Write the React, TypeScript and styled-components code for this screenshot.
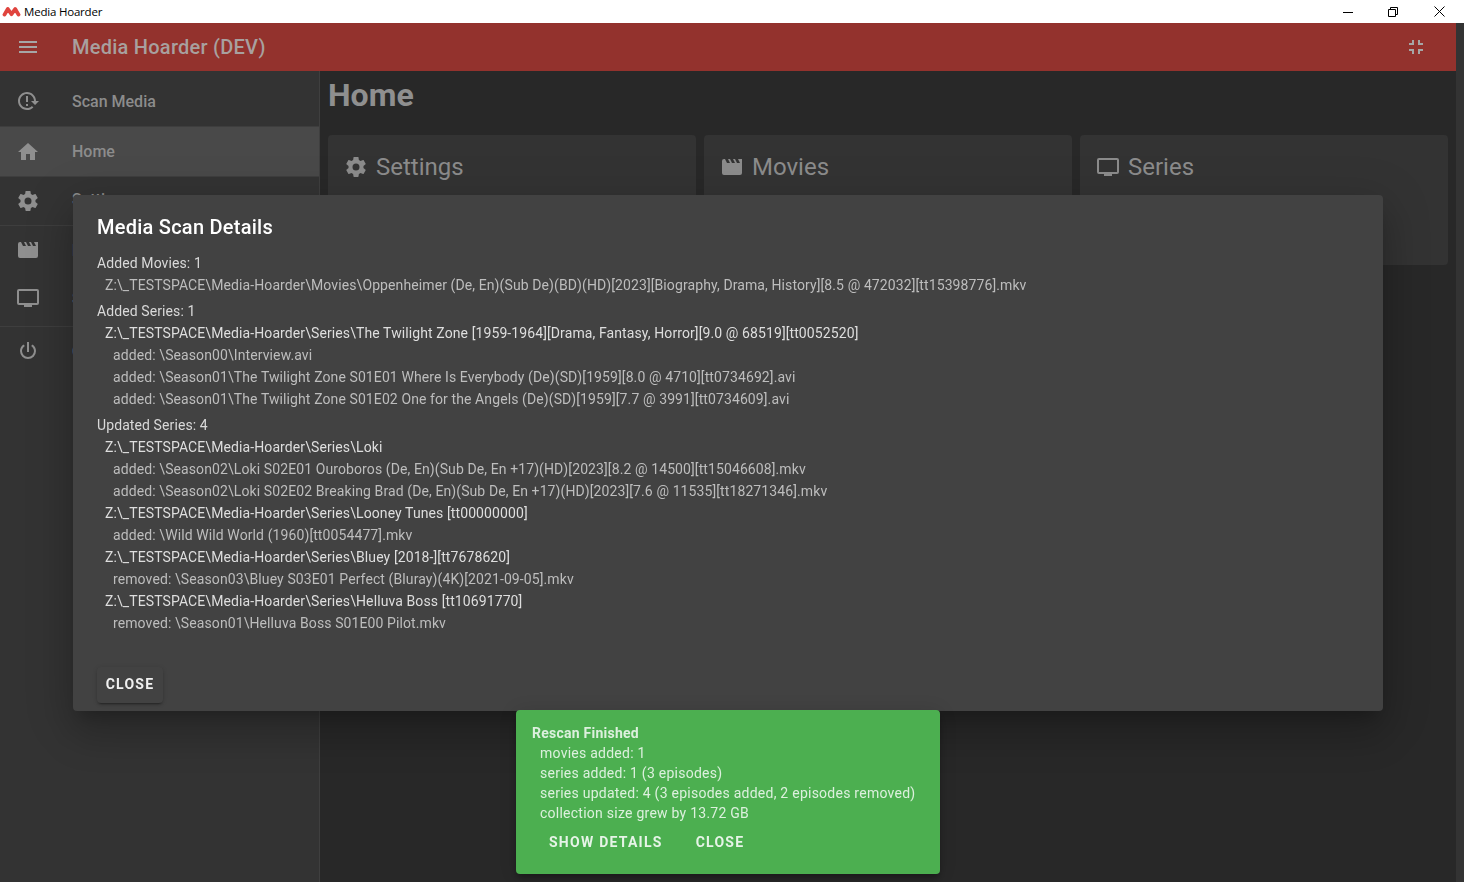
import React from "react";
import styled, { createGlobalStyle } from "styled-components";

const GlobalStyle = createGlobalStyle`
  html, body {
    margin: 0;
    padding: 0;
    height: 100%;
    overflow: hidden;
    background: #333;
  }

  * {
    box-sizing: border-box;
  }
`;

const ICONS = {
  menu: "M3,6H21V8H3V6M3,11H21V13H3V11M3,16H21V18H3V16Z",
  shrink: "M14,14H19V16H16V19H14V14M5,14H10V19H8V16H5V14M8,5H10V10H5V8H8V5M19,8V10H14V5H16V8H19Z",
  scan: "M2 12C2 16.97 6.03 21 11 21C13.39 21 15.68 20.06 17.4 18.4L15.9 16.9C14.63 18.25 12.86 19 11 19C4.76 19 1.64 11.46 6.05 7.05C10.46 2.64 18 5.77 18 12H15L19 16H19.1L23 12H20C20 7.03 15.97 3 11 3C6.03 3 2 7.03 2 12M10 15H12V17H10V15M10 7H12V13H10V7Z",
  home: "M10,20V14H14V20H19V12H22L12,3L2,12H5V20H10Z",
  cog: "M12,15.5A3.5,3.5 0 0,1 8.5,12A3.5,3.5 0 0,1 12,8.5A3.5,3.5 0 0,1 15.5,12A3.5,3.5 0 0,1 12,15.5M19.43,12.97C19.47,12.65 19.5,12.33 19.5,12C19.5,11.67 19.47,11.34 19.43,11L21.54,9.37C21.73,9.22 21.78,8.95 21.66,8.73L19.66,5.27C19.54,5.05 19.27,4.96 19.05,5.05L16.56,6.05C16.04,5.66 15.5,5.32 14.87,5.07L14.5,2.42C14.46,2.18 14.25,2 14,2H10C9.75,2 9.54,2.18 9.5,2.42L9.13,5.07C8.5,5.32 7.96,5.66 7.44,6.05L4.95,5.05C4.73,4.96 4.46,5.05 4.34,5.27L2.34,8.73C2.21,8.95 2.27,9.22 2.46,9.37L4.57,11C4.53,11.34 4.5,11.67 4.5,12C4.5,12.33 4.53,12.65 4.57,12.97L2.46,14.63C2.27,14.78 2.21,15.05 2.34,15.27L4.34,18.73C4.46,18.95 4.73,19.03 4.95,18.95L7.44,17.94C7.96,18.34 8.5,18.68 9.13,18.93L9.5,21.58C9.54,21.82 9.75,22 10,22H14C14.25,22 14.46,21.82 14.5,21.58L14.87,18.93C15.5,18.67 16.04,18.34 16.56,17.94L19.05,18.95C19.27,19.03 19.54,18.95 19.66,18.73L21.66,15.27C21.78,15.05 21.73,14.78 21.54,14.63L19.43,12.97Z",
  movie: "M18,4L20,8H17L15,4H13L15,8H12L10,4H8L10,8H7L5,4H4A2,2 0 0,0 2,6V18A2,2 0 0,0 4,20H20A2,2 0 0,0 22,18V4H18Z",
  tv: "M21,17H3V5H21M21,3H3A2,2 0 0,0 1,5V17A2,2 0 0,0 3,19H8V21H16V19H21A2,2 0 0,0 23,17V5A2,2 0 0,0 21,3Z",
  power: "M16.56,5.44L15.11,6.89C16.84,7.94 18,9.83 18,12A6,6 0 0,1 12,18A6,6 0 0,1 6,12C6,9.83 7.16,7.94 8.88,6.88L7.44,5.44C5.36,6.88 4,9.28 4,12A8,8 0 0,0 12,20A8,8 0 0,0 20,12C20,9.28 18.64,6.88 16.56,5.44M13,3H11V13H13",
};

const Window = styled.div`
  display: flex;
  flex-direction: column;
  height: 882px;
  font-family: Roboto, sans-serif;
`;

const TitleBar = styled.header`
  flex: 0 0 23px;
  display: flex;
  align-items: center;
  background: #fff;
  color: #000;
  padding: 0 2px 0 2px;
  font-family: "Open Sans", sans-serif;
  font-size: 11.5px;
  letter-spacing: -0.2px;
`;

const AppName = styled.span`
  margin-left: 3px;
  flex: 1;
`;

const WindowButton = styled.button`
  width: 46px;
  height: 23px;
  padding: 0;
  border: none;
  background: none;
  display: flex;
  align-items: center;
  justify-content: center;
`;

const MinimizeButton = styled(WindowButton)`
  margin-right: -1px;
`;

const Body = styled.div`
  flex: 1;
  display: flex;
  min-height: 0;
`;

const Page = styled.div`
  flex: 1;
  display: flex;
  flex-direction: column;
  min-width: 0;
`;

const ScrollTrack = styled.div`
  flex: 0 0 8px;
  background: #333;
`;

const Toolbar = styled.div`
  flex: 0 0 48px;
  display: flex;
  align-items: center;
  padding: 0 28px 0 16px;
  background: #93322d;
  color: #a6a6a6;
  position: relative;
  z-index: 1;
`;

const ToolbarTitle = styled.h2`
  flex: 1;
  margin: 0 0 0 32px;
  font-size: 20px;
  font-weight: 500;
  letter-spacing: 0.25px;
  color: #a8a09f;
`;

const Content = styled.div`
  flex: 1;
  display: flex;
  min-height: 0;
`;

const Sidebar = styled.nav`
  flex: 0 0 320px;
  background: #333;
  border-right: 1px solid #3f3f3f;
  padding-top: 5px;
`;

const NavItem = styled.div<{ $active?: boolean; $height?: number }>`
  height: ${(p) => p.$height ?? 48}px;
  display: flex;
  align-items: center;
  padding-left: 16px;
  background: ${(p) => (p.$active ? "#494949" : "transparent")};
  color: #8f8f8f;
`;

const NavLabel = styled.span<{ $lift?: number }>`
  margin: 0 0 ${(p) => p.$lift ?? 0}px 32px;
  font-size: 16px;
  font-weight: 500;
  color: #8c8c8c;
`;

const NavDivider = styled.div<{ $gap?: number }>`
  height: 1px;
  margin-top: ${(p) => p.$gap ?? 0}px;
  background: #3e3e3e;
`;

const Main = styled.main`
  flex: 1;
  min-width: 0;
  background: #282828;
  padding: 0 8px;
`;

const Heading = styled.h1`
  margin: 0 0 16px;
  height: 48px;
  display: flex;
  align-items: center;
  font-size: 32px;
  font-weight: 700;
  color: #8f8f8f;
`;

const CardGrid = styled.div`
  display: grid;
  grid-template-columns: repeat(3, 1fr);
  gap: 8px;
`;

const Card = styled.section`
  height: 130px;
  padding: 16px;
  background: #333;
  border-radius: 4px;
`;

const CardTitle = styled.div`
  display: flex;
  align-items: center;
  gap: 8px;
  height: 32px;
  font-size: 24px;
  color: #8c8c8c;
`;

const Dialog = styled.div`
  position: fixed;
  left: 73px;
  top: 195px;
  width: 1310px;
  height: 516px;
  padding: 16px 24px 8px;
  display: flex;
  flex-direction: column;
  background: #424242;
  border-radius: 4px;
  box-shadow: 0 11px 15px -7px rgba(0, 0, 0, 0.2), 0 24px 38px 3px rgba(0, 0, 0, 0.14),
    0 9px 46px 8px rgba(0, 0, 0, 0.12);
`;

const DialogTitle = styled.h3`
  margin: 0 0 9px;
  font-size: 20px;
  line-height: 32px;
  font-weight: 500;
  letter-spacing: 0.25px;
  color: #fff;
`;

const Log = styled.div`
  flex: 1;
  font-size: 14px;
  line-height: 22px;
  letter-spacing: 0.1px;
`;

const LogHeader = styled.div`
  margin-top: 4px;
  color: #d9d9d9;

  &:first-child {
    margin-top: 0;
  }
`;

const LogLine = styled.div<{ $level: number; $dim?: boolean }>`
  padding-left: ${(p) => p.$level * 8}px;
  color: ${(p) => (p.$dim ? "#bdbdbd" : "#dedede")};
  white-space: nowrap;
`;

const DialogActions = styled.div`
  display: flex;
`;

const RaisedButton = styled.button`
  width: 66px;
  height: 36px;
  padding: 0 0 2px;
  border: none;
  border-radius: 4px;
  background: #424242;
  color: #f0f0f0;
  font-family: Roboto, sans-serif;
  font-size: 14px;
  font-weight: 700;
  letter-spacing: 1.25px;
  box-shadow: 0 3px 1px -2px rgba(0, 0, 0, 0.2), 0 2px 2px 0 rgba(0, 0, 0, 0.14),
    0 1px 5px 0 rgba(0, 0, 0, 0.12);
`;

const Snackbar = styled.div`
  position: fixed;
  left: 516px;
  top: 710px;
  width: 424px;
  height: 164px;
  padding: 13px 16px 0;
  background: #4caf50;
  border-radius: 4px;
  color: #dcf0dd;
  font-size: 14px;
  line-height: 20px;
  letter-spacing: 0.25px;
  box-shadow: 0 3px 5px -1px rgba(0, 0, 0, 0.2), 0 6px 10px 0 rgba(0, 0, 0, 0.14),
    0 1px 18px 0 rgba(0, 0, 0, 0.12);
`;

const SnackTitle = styled.div`
  font-weight: 700;
`;

const SnackLine = styled.div`
  padding-left: 8px;
`;

const SnackActions = styled.div`
  display: flex;
  gap: 1px;
  margin-top: 1px;
  padding-left: 1px;
`;

const TextButton = styled.button`
  height: 36px;
  padding: 0 16px;
  border: none;
  background: none;
  color: #e6f4e7;
  font-family: Roboto, sans-serif;
  font-size: 14px;
  font-weight: 700;
  letter-spacing: 1.25px;
`;

const Icon: React.FC<{ d: string; size?: number }> = ({ d, size = 24 }) => (
  <svg width={size} height={size} viewBox="0 0 24 24" fill="currentColor">
    <path d={d} />
  </svg>
);

const Logo = () => (
  <svg width="19" height="11" viewBox="0 0 19 11" fill="none" stroke="#e0443e" strokeWidth="3.8" strokeLinecap="round" strokeLinejoin="round">
    <path d="M2.5 8.6L5.8 3L9.5 8.2L13.2 3L16.5 8.6" />
  </svg>
);

const logLines: { kind: "header" | "path" | "file"; text: string; dim?: boolean }[] = [
  { kind: "header", text: "Added Movies: 1" },
  { kind: "path", dim: true, text: "Z:\\_TESTSPACE\\Media-Hoarder\\Movies\\Oppenheimer (De, En)(Sub De)(BD)(HD)[2023][Biography, Drama, History][8.5 @ 472032][tt15398776].mkv" },
  { kind: "header", text: "Added Series: 1" },
  { kind: "path", text: "Z:\\_TESTSPACE\\Media-Hoarder\\Series\\The Twilight Zone [1959-1964][Drama, Fantasy, Horror][9.0 @ 68519][tt0052520]" },
  { kind: "file", text: "added: \\Season00\\Interview.avi" },
  { kind: "file", text: "added: \\Season01\\The Twilight Zone S01E01 Where Is Everybody (De)(SD)[1959][8.0 @ 4710][tt0734692].avi" },
  { kind: "file", text: "added: \\Season01\\The Twilight Zone S01E02 One for the Angels (De)(SD)[1959][7.7 @ 3991][tt0734609].avi" },
  { kind: "header", text: "Updated Series: 4" },
  { kind: "path", text: "Z:\\_TESTSPACE\\Media-Hoarder\\Series\\Loki" },
  { kind: "file", text: "added: \\Season02\\Loki S02E01 Ouroboros (De, En)(Sub De, En +17)(HD)[2023][8.2 @ 14500][tt15046608].mkv" },
  { kind: "file", text: "added: \\Season02\\Loki S02E02 Breaking Brad (De, En)(Sub De, En +17)(HD)[2023][7.6 @ 11535][tt18271346].mkv" },
  { kind: "path", text: "Z:\\_TESTSPACE\\Media-Hoarder\\Series\\Looney Tunes [tt00000000]" },
  { kind: "file", text: "added: \\Wild Wild World (1960)[tt0054477].mkv" },
  { kind: "path", text: "Z:\\_TESTSPACE\\Media-Hoarder\\Series\\Bluey [2018-][tt7678620]" },
  { kind: "file", text: "removed: \\Season03\\Bluey S03E01 Perfect (Bluray)(4K)[2021-09-05].mkv" },
  { kind: "path", text: "Z:\\_TESTSPACE\\Media-Hoarder\\Series\\Helluva Boss [tt10691770]" },
  { kind: "file", text: "removed: \\Season01\\Helluva Boss S01E00 Pilot.mkv" },
];

const App: React.FC = () => {
  return (
    <Window>
      <GlobalStyle />
      <TitleBar>
        <Logo />
        <AppName>Media Hoarder</AppName>
        <MinimizeButton>
          <svg width="10" height="10" viewBox="0 0 10 10" stroke="#000" fill="none">
            <path d="M0 5.5H10" />
          </svg>
        </MinimizeButton>
        <WindowButton>
          <svg width="10" height="10" viewBox="0 0 10 10" stroke="#000" fill="none">
            <path d="M.5 2.5H7.5V9.5H.5ZM2.5 2.5V.5H9.5V7.5H7.5" />
          </svg>
        </WindowButton>
        <WindowButton>
          <svg width="11" height="11" viewBox="0 0 11 11" stroke="#000" fill="none">
            <path d="M.5 .5L10.5 10.5M10.5 .5L.5 10.5" />
          </svg>
        </WindowButton>
      </TitleBar>
      <Body>
        <Page>
          <Toolbar>
            <Icon d={ICONS.menu} />
            <ToolbarTitle>Media Hoarder (DEV)</ToolbarTitle>
            <Icon d={ICONS.shrink} />
          </Toolbar>
          <Content>
            <Sidebar>
              <NavItem $height={50}>
                <Icon d={ICONS.scan} />
                <NavLabel>Scan Media</NavLabel>
              </NavItem>
              <NavDivider />
              <NavItem $active $height={49}>
                <Icon d={ICONS.home} />
                <NavLabel>Home</NavLabel>
              </NavItem>
              <NavDivider />
              <NavItem>
                <Icon d={ICONS.cog} />
                <NavLabel $lift={3}>Settings</NavLabel>
              </NavItem>
              <NavDivider />
              <NavItem>
                <Icon d={ICONS.movie} />
                <NavLabel>Movies</NavLabel>
              </NavItem>
              <NavItem>
                <Icon d={ICONS.tv} />
                <NavLabel>Series</NavLabel>
              </NavItem>
              <NavDivider $gap={4} />
              <NavItem>
                <Icon d={ICONS.power} />
                <NavLabel>Quit</NavLabel>
              </NavItem>
            </Sidebar>
            <Main>
              <Heading>Home</Heading>
              <CardGrid>
                <Card>
                  <CardTitle>
                    <Icon d={ICONS.cog} />
                    Settings
                  </CardTitle>
                </Card>
                <Card>
                  <CardTitle>
                    <Icon d={ICONS.movie} />
                    Movies
                  </CardTitle>
                </Card>
                <Card>
                  <CardTitle>
                    <Icon d={ICONS.tv} />
                    Series
                  </CardTitle>
                </Card>
              </CardGrid>
            </Main>
          </Content>
        </Page>
        <ScrollTrack />
      </Body>

      <Dialog>
        <DialogTitle>Media Scan Details</DialogTitle>
        <Log>
          {logLines.map((line, i) =>
            line.kind === "header" ? (
              <LogHeader key={i}>{line.text}</LogHeader>
            ) : (
              <LogLine key={i} $level={line.kind === "path" ? 1 : 2} $dim={line.dim || line.kind === "file"}>
                {line.text}
              </LogLine>
            ),
          )}
        </Log>
        <DialogActions>
          <RaisedButton>CLOSE</RaisedButton>
        </DialogActions>
      </Dialog>

      <Snackbar>
        <SnackTitle>Rescan Finished</SnackTitle>
        <SnackLine>movies added: 1</SnackLine>
        <SnackLine>series added: 1 (3 episodes)</SnackLine>
        <SnackLine>series updated: 4 (3 episodes added, 2 episodes removed)</SnackLine>
        <SnackLine>collection size grew by 13.72 GB</SnackLine>
        <SnackActions>
          <TextButton>SHOW DETAILS</TextButton>
          <TextButton>CLOSE</TextButton>
        </SnackActions>
      </Snackbar>
    </Window>
  );
};

export default App;
